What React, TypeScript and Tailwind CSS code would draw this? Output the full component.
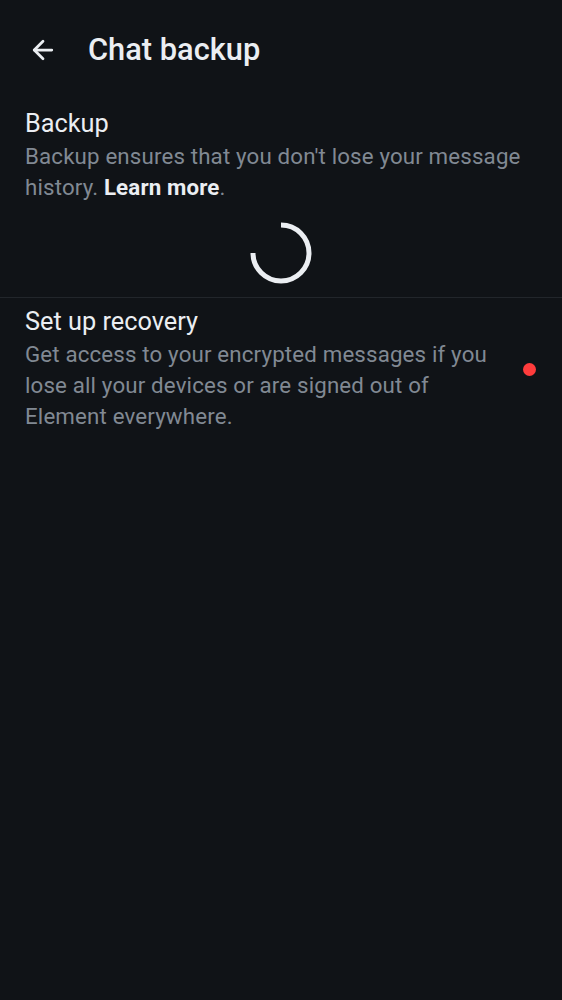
import { ArrowLeft } from "lucide-react";

export default function App() {
  return (
    <div
      className="min-h-screen w-full bg-[#101317] text-[#ebeef2]"
      style={{ fontFamily: "Roboto, 'Liberation Sans', sans-serif" }}
    >
      {/* Top bar */}
      <header className="flex items-center h-[100px] px-[28px]">
        <button className="flex items-center justify-center w-[30px] h-[30px]">
          <ArrowLeft className="w-[30px] h-[30px]" strokeWidth={2.2} />
        </button>
        <h1 className="ml-[30px] text-[30.8px] font-medium">Chat backup</h1>
      </header>

      {/* Backup */}
      <section className="px-[25px] pt-[9px]">
        <p className="text-[25.3px] leading-[30px]">Backup</p>
        <p className="mt-[2px] text-[22.3px] leading-[31px] text-[#818993] tracking-[0.15px]">
          Backup ensures that you don't lose your message history.{" "}
          <span className="font-bold text-[#ebeef2]">Learn more</span>.
        </p>
      </section>

      <div className="flex justify-center pt-[17px] pb-[11px]">
        <svg width="66" height="66" viewBox="0 0 66 66">
          <path
            d="M33 5 A28 28 0 1 1 5 33"
            fill="none"
            stroke="#ebeef2"
            strokeWidth="5"
          />
        </svg>
      </div>

      <div className="h-px bg-[#22262b]" />

      {/* Recovery */}
      <section className="flex items-center justify-between pl-[25px] pr-[26px] pt-[9px]">
        <div className="w-[470px]">
          <p className="text-[25.3px] leading-[30px]">Set up recovery</p>
          <p className="mt-[2px] text-[22.3px] leading-[31px] text-[#818993] tracking-[0.15px]">
            Get access to your encrypted messages if you lose all your devices or are signed out of
            Element everywhere.
          </p>
        </div>
        <span className="w-[13px] h-[13px] rounded-full bg-[#ff3c3c]" />
      </section>
    </div>
  );
}
